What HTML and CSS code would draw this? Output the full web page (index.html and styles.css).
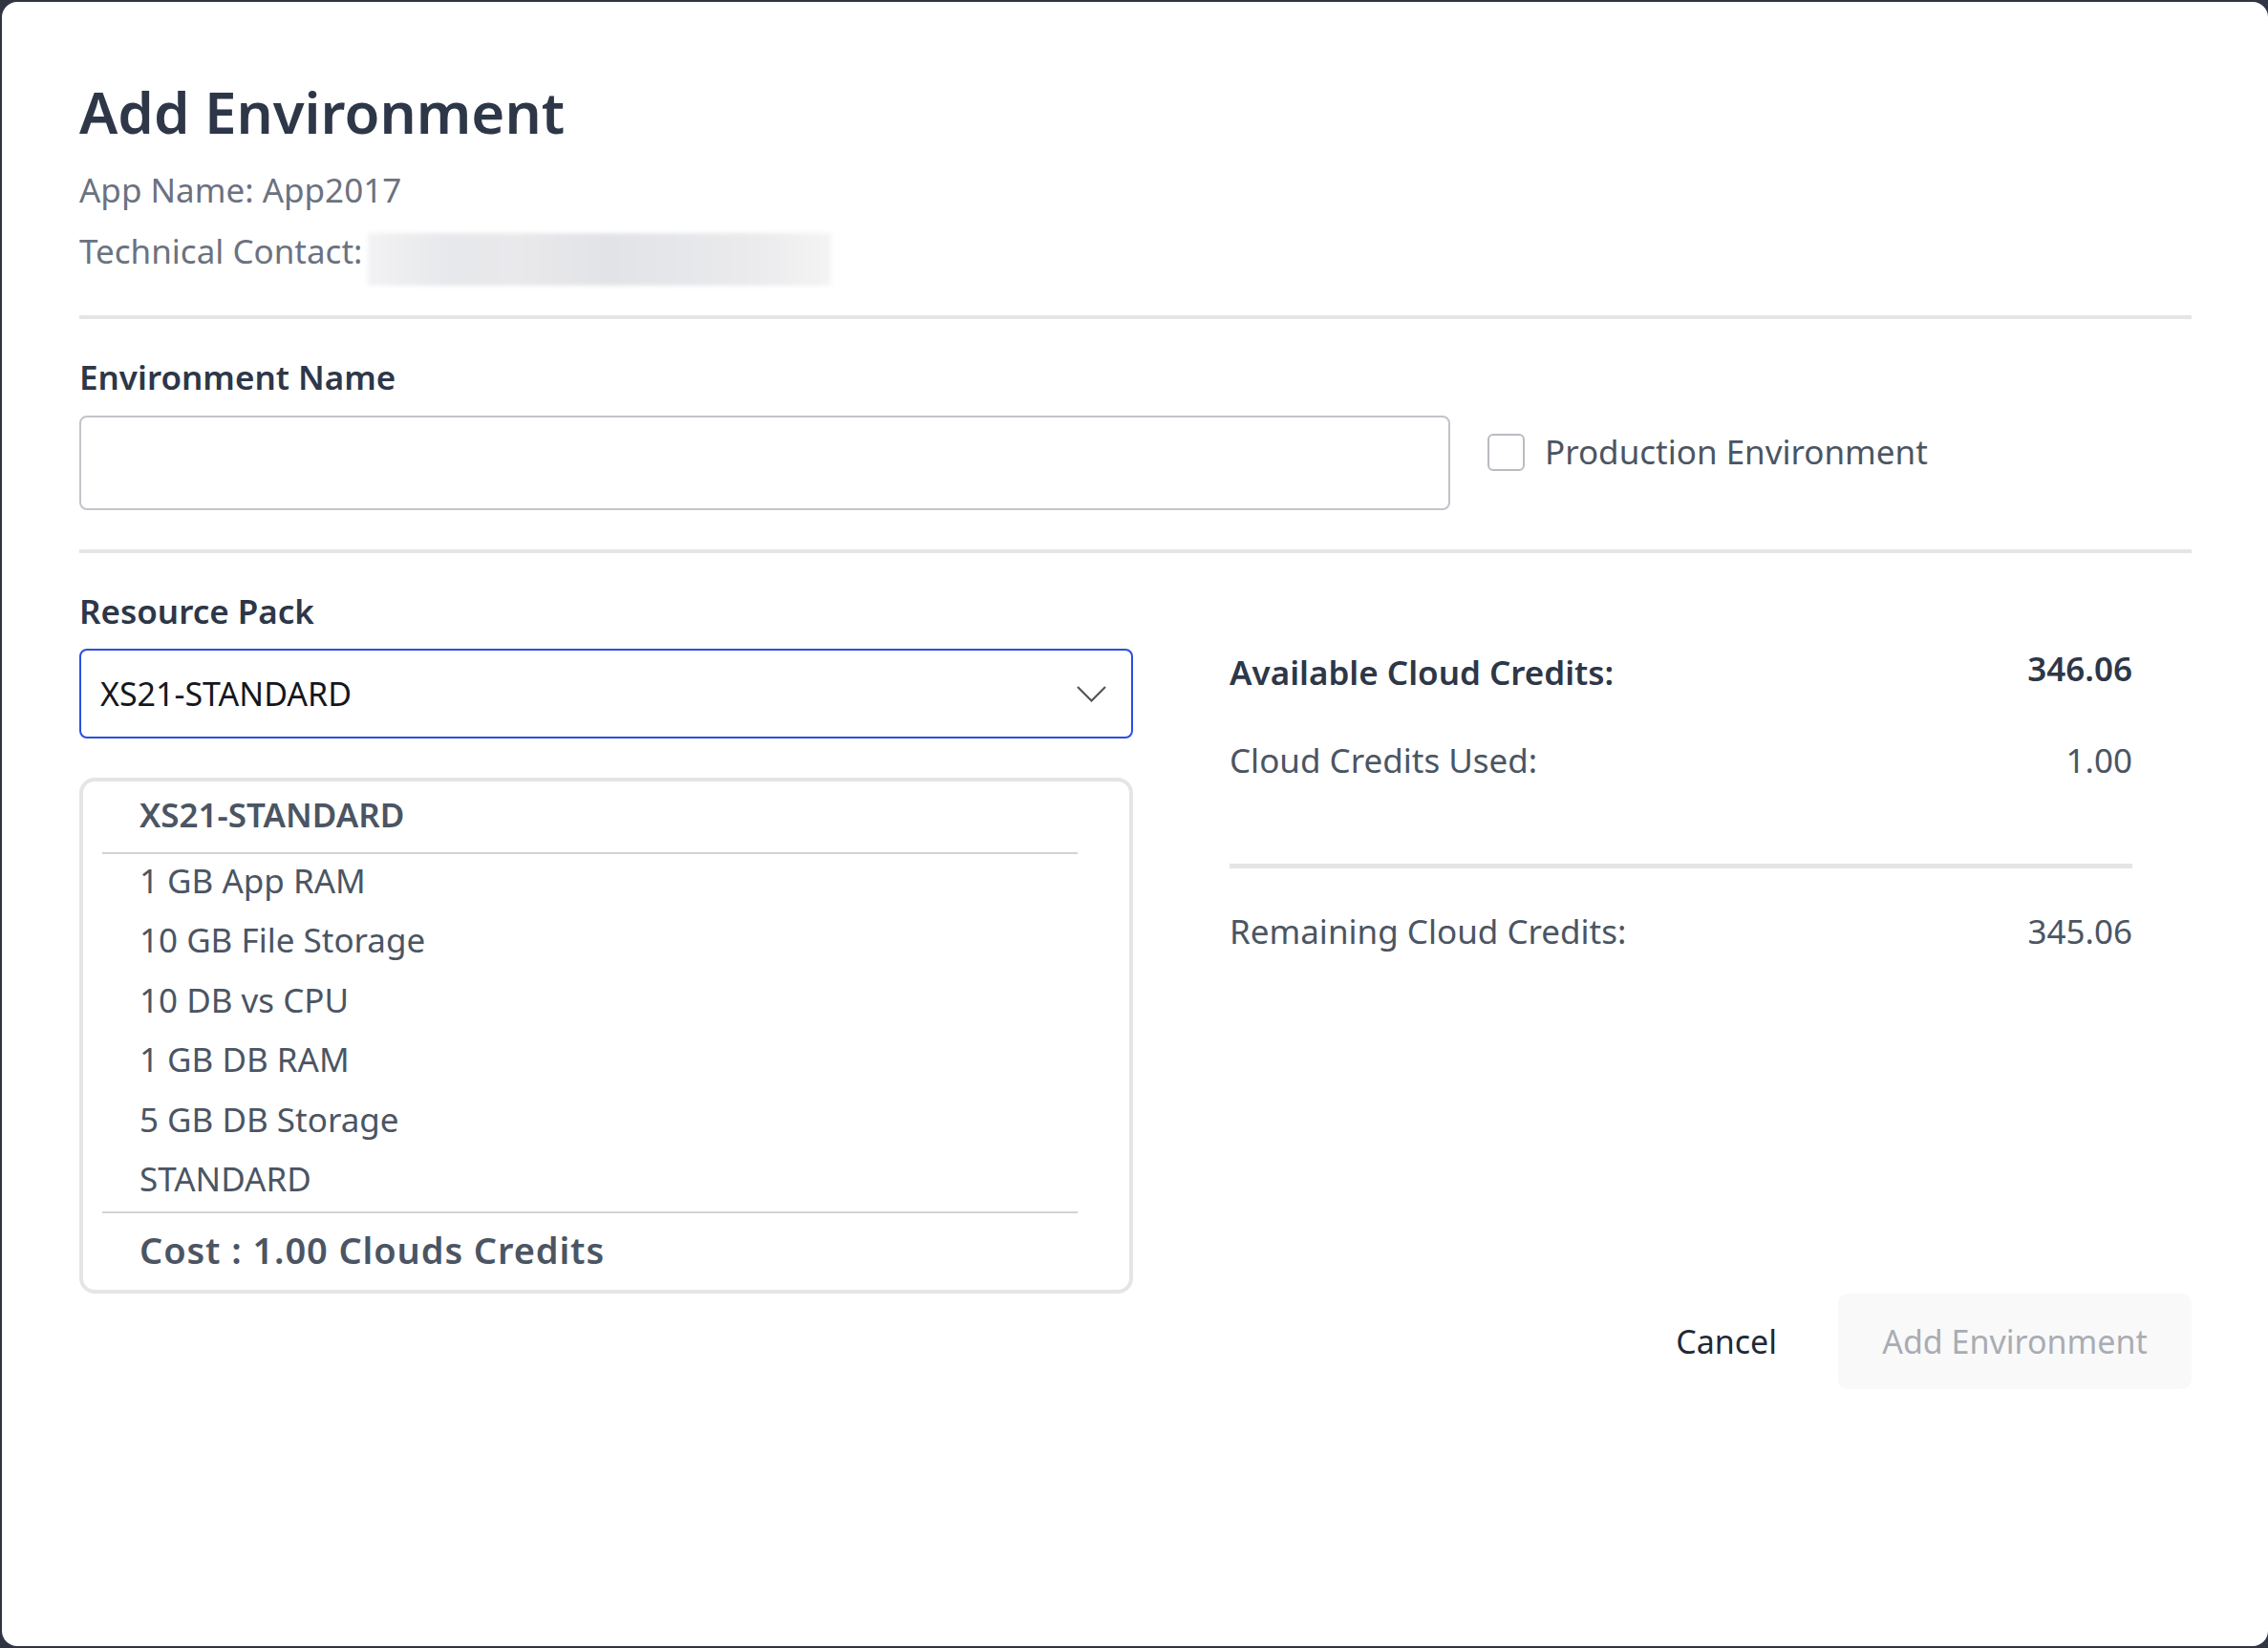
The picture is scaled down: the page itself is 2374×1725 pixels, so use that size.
FILE: index.html
```html
<!DOCTYPE html>
<html lang="en">
<head>
<meta charset="utf-8">
<title>Add Environment</title>
<link rel="stylesheet" href="styles.css">
</head>
<body>
<div class="modal">
  <header class="head">
    <h1 class="title">Add Environment</h1>
    <div class="meta">App Name: App2017</div>
    <div class="meta contact-row">Technical Contact: <span class="blur"></span></div>
  </header>
  <hr class="divider">
  <section class="env">
    <label class="label">Environment Name</label>
    <div class="env-row">
      <div class="input"></div>
      <div class="check-group">
        <span class="checkbox"></span>
        <span class="check-text">Production Environment</span>
      </div>
    </div>
  </section>
  <hr class="divider">
  <section class="grid">
    <div class="left">
      <label class="label">Resource Pack</label>
      <div class="select">
        <span class="select-text">XS21-STANDARD</span>
        <svg class="chev" width="31" height="17" viewBox="0 0 31 17"><path d="M1 1 L15.5 15.5 L30 1" fill="none" stroke="#555" stroke-width="2.2"/></svg>
      </div>
      <div class="card">
        <div class="card-title">XS21-STANDARD</div>
        <div class="card-line"></div>
        <ul class="items">
          <li>1 GB App RAM</li>
          <li>10 GB File Storage</li>
          <li>10 DB vs CPU</li>
          <li>1 GB DB RAM</li>
          <li>5 GB DB Storage</li>
          <li>STANDARD</li>
        </ul>
        <div class="card-line"></div>
        <div class="cost">Cost : 1.00 Clouds Credits</div>
      </div>
    </div>
    <div class="right">
      <div class="row row-strong"><span>Available Cloud Credits:</span><span class="val">346.06</span></div>
      <div class="row"><span>Cloud Credits Used:</span><span class="val">1.00</span></div>
      <div class="rdivider"></div>
      <div class="row"><span>Remaining Cloud Credits:</span><span class="val">345.06</span></div>
    </div>
  </section>
  <footer class="foot">
    <button class="btn-cancel">Cancel</button>
    <button class="btn-add" disabled>Add Environment</button>
  </footer>
</div>
</body>
</html>
```
FILE: styles.css
```css
* { box-sizing: border-box; }
html, body { margin: 0; padding: 0; }
body {
  background: #2f3542;
  font-family: "Noto Sans", "Open Sans", sans-serif;
  width: 2374px;
  height: 1725px;
  overflow: hidden;
}
.modal {
  margin: 2px 0 0 2px;
  width: 2372px;
  height: 1721px;
  background: #fff;
  border-radius: 16px;
  padding: 76px 80px 0 81px;
}
.title {
  margin: 0 0 11px;
  font-size: 60px;
  line-height: 78px;
  font-weight: 600;
  color: #2d3748;
}
.meta {
  font-size: 35px;
  line-height: 64px;
  color: #6b7280;
}
.contact-row {
  display: flex;
  align-items: flex-start;
}
.blur {
  display: block;
  margin-top: 13px;
  margin-left: 6px;
  width: 485px;
  height: 55px;
  background: linear-gradient(90deg, #f2f2f4 0%, #e7e8eb 18%, #e9e9ec 32%, #e2e3e6 52%, #e6e7ea 68%, #ebebed 84%, #f4f4f5 100%);
  filter: blur(2px);
}
.divider {
  border: 0;
  height: 4px;
  background: #e5e5e5;
  margin: 31px 0 0;
}
.label {
  display: block;
  font-size: 35px;
  line-height: 46px;
  font-weight: 600;
  color: #2d3748;
}
.env { padding-top: 38px; }
.env-row {
  display: flex;
  align-items: flex-start;
  margin-top: 17px;
}
.input {
  width: 1435px;
  height: 99px;
  border: 2px solid #c3c4ca;
  border-radius: 8px;
}
.check-group {
  display: flex;
  align-items: center;
  margin-left: 39px;
  margin-top: 15px;
}
.checkbox {
  width: 39px;
  height: 39px;
  border: 2px solid #b9bbc2;
  border-radius: 6px;
}
.check-text {
  margin-left: 21px;
  font-size: 35px;
  line-height: 46px;
  color: #4b5563;
}
.env + .divider { margin-top: 41px; }
.grid {
  display: grid;
  grid-template-columns: 1103px 1fr;
  padding-top: 38px;
}
.select {
  margin-top: 16px;
  height: 94px;
  border: 2px solid #2b4ee0;
  border-radius: 8px;
  display: flex;
  align-items: center;
  justify-content: space-between;
  padding: 0 26px 0 20px;
}
.select-text {
  font-size: 34px;
  line-height: 46px;
  color: #15171c;
}
.chev { display: block; }
.card {
  margin-top: 41px;
  border: 4px solid #e5e5e5;
  border-radius: 16px;
  padding: 0 54px 0 20px;
}
.card-title {
  font-size: 35px;
  line-height: 70px;
  font-weight: 600;
  color: #4b5563;
  padding-left: 39px;
  margin-bottom: 4px;
}
.card-line {
  height: 2px;
  background: #d2d3d8;
}
.items {
  list-style: none;
  margin: -3px 0 3px;
  padding: 0 0 0 39px;
}
.items li {
  font-size: 35px;
  line-height: 62.4px;
  color: #4b5563;
}
.cost {
  font-size: 38px;
  letter-spacing: 0.9px;
  line-height: 76px;
  padding-bottom: 4px;
  font-weight: 600;
  color: #4b5563;
  padding-left: 39px;
}
.right {
  padding: 64px 62px 0 101px;
}
.row {
  display: flex;
  justify-content: space-between;
  align-items: baseline;
  font-size: 35px;
  line-height: 46px;
  color: #4b5563;
  margin-bottom: 46px;
}
.row-strong span:first-child {
  font-weight: 600;
  color: #2d3748;
}
.row-strong .val {
  font-weight: 600;
  color: #2d3748;
  font-size: 35px;
  position: relative;
  top: -4px;
}
.rdivider {
  height: 5px;
  background: #e5e5e5;
  margin: 85px 0 43px;
}
.foot {
  display: flex;
  justify-content: flex-end;
  align-items: center;
  margin-top: 0;
}
.btn-cancel {
  font-family: inherit;
  font-size: 34px;
  color: #1f2937;
  background: none;
  border: 0;
  padding: 0;
  margin-right: 64px;
}
.btn-add {
  font-family: inherit;
  font-size: 34px;
  color: #a9acb4;
  background: #f9f9f9;
  border: 0;
  border-radius: 10px;
  width: 370px;
  height: 100px;
  padding: 0;
}
```
